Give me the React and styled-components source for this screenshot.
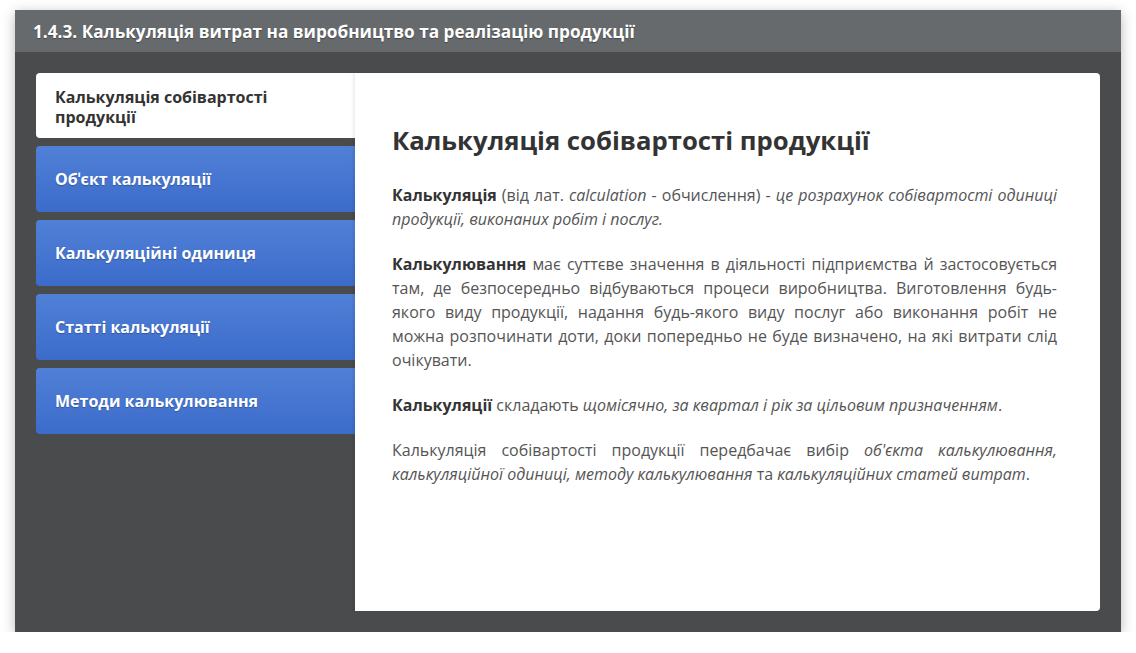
import styled, { createGlobalStyle } from "styled-components"

const GlobalStyle = createGlobalStyle`
  html, body {
    margin: 0;
    padding: 0;
    background: #ffffff;
    font-family: "Open Sans", "Noto Sans", sans-serif;
  }
`

const Frame = styled.div`
  margin: 10px 15px 0 15px;
  width: 1106px;
  height: 622px;
  background: #4a4b4d;
  box-shadow: 0 3px 12px rgba(0, 0, 0, 0.28);
  display: flex;
  flex-direction: column;
`

const Header = styled.div`
  height: 42px;
  background: #676a6d;
  display: flex;
  align-items: center;
  padding: 0 18px;
  color: #ffffff;
  font-size: 17.2px;
  font-weight: 700;
  text-shadow: 0 1px 1px rgba(0, 0, 0, 0.35);
`

const Body = styled.div`
  flex: 1;
  display: flex;
  padding: 21px;
`

const Sidebar = styled.div`
  width: 319px;
  display: flex;
  flex-direction: column;
  gap: 8px;
`

const Tab = styled.div`
  height: ${p => (p.$active ? "65px" : "66px")};
  box-sizing: border-box;
  border-radius: 4px 0 0 4px;
  display: flex;
  align-items: ${p => (p.$active ? "flex-start" : "center")};
  padding: ${p => (p.$active ? "14px 40px 0 19px" : "0 19px")};
  font-size: 16px;
  font-weight: 700;
  line-height: 20px;
  color: ${p => (p.$active ? "#333333" : "#ffffff")};
  background: ${p =>
    p.$active ? "#ffffff" : "linear-gradient(to bottom, #5080d6 0%, #3c6ccb 100%)"};
  text-shadow: ${p => (p.$active ? "none" : "0 1px 1px rgba(0, 0, 0, 0.25)")};
`

const Panel = styled.div`
  flex: 1;
  background: #ffffff;
  border-radius: 0 4px 4px 0;
  padding: 50px 43px 0 37px;
  box-shadow: -2px 0 3px rgba(0, 0, 0, 0.08);
  color: #555555;
`

const Title = styled.h1`
  margin: 0 0 24px 0;
  font-size: 25.7px;
  line-height: 36px;
  font-weight: 700;
  color: #333333;
`

const Para = styled.p`
  margin: 0 0 21px 0;
  font-size: 16px;
  line-height: 24px;
  text-align: justify;
  color: #555555;

  b {
    color: #333333;
    font-weight: 700;
  }
`

const tabs = [
  "Об'єкт калькуляції",
  "Калькуляційні одиниця",
  "Статті калькуляції",
  "Методи калькулювання",
]

export default function App() {
  return (
    <>
      <GlobalStyle />
      <Frame>
        <Header>1.4.3. Калькуляція витрат на виробництво та реалізацію продукції</Header>
        <Body>
          <Sidebar>
            <Tab $active>Калькуляція собівартості продукції</Tab>
            {tabs.map(t => (
              <Tab key={t}>{t.replace("'", "ˈ")}</Tab>
            ))}
          </Sidebar>
          <Panel>
            <Title>Калькуляція собівартості продукції</Title>
            <Para>
              <b>Калькуляція</b> (від лат. <i>calculation</i> - обчислення) - <i>це розрахунок собівартості одиниці продукції, виконаних робіт і послуг.</i>
            </Para>
            <Para>
              <b>Калькулювання</b> має суттєве значення в діяльності підприємства й застосовується там, де безпосередньо відбуваються процеси виробництва. Виготовлення будь-якого виду продукції, надання будь-якого виду послуг або виконання робіт не можна розпочинати доти, доки попередньо не буде визначено, на які витрати слід очікувати.
            </Para>
            <Para>
              <b>Калькуляції</b> складають <i>щомісячно, за квартал і рік за цільовим призначенням</i>.
            </Para>
            <Para>
              Калькуляція собівартості продукції передбачає вибір <i>об'єкта калькулювання, калькуляційної одиниці, методу калькулювання</i> та <i>калькуляційних статей витрат</i>.
            </Para>
          </Panel>
        </Body>
      </Frame>
    </>
  )
}
